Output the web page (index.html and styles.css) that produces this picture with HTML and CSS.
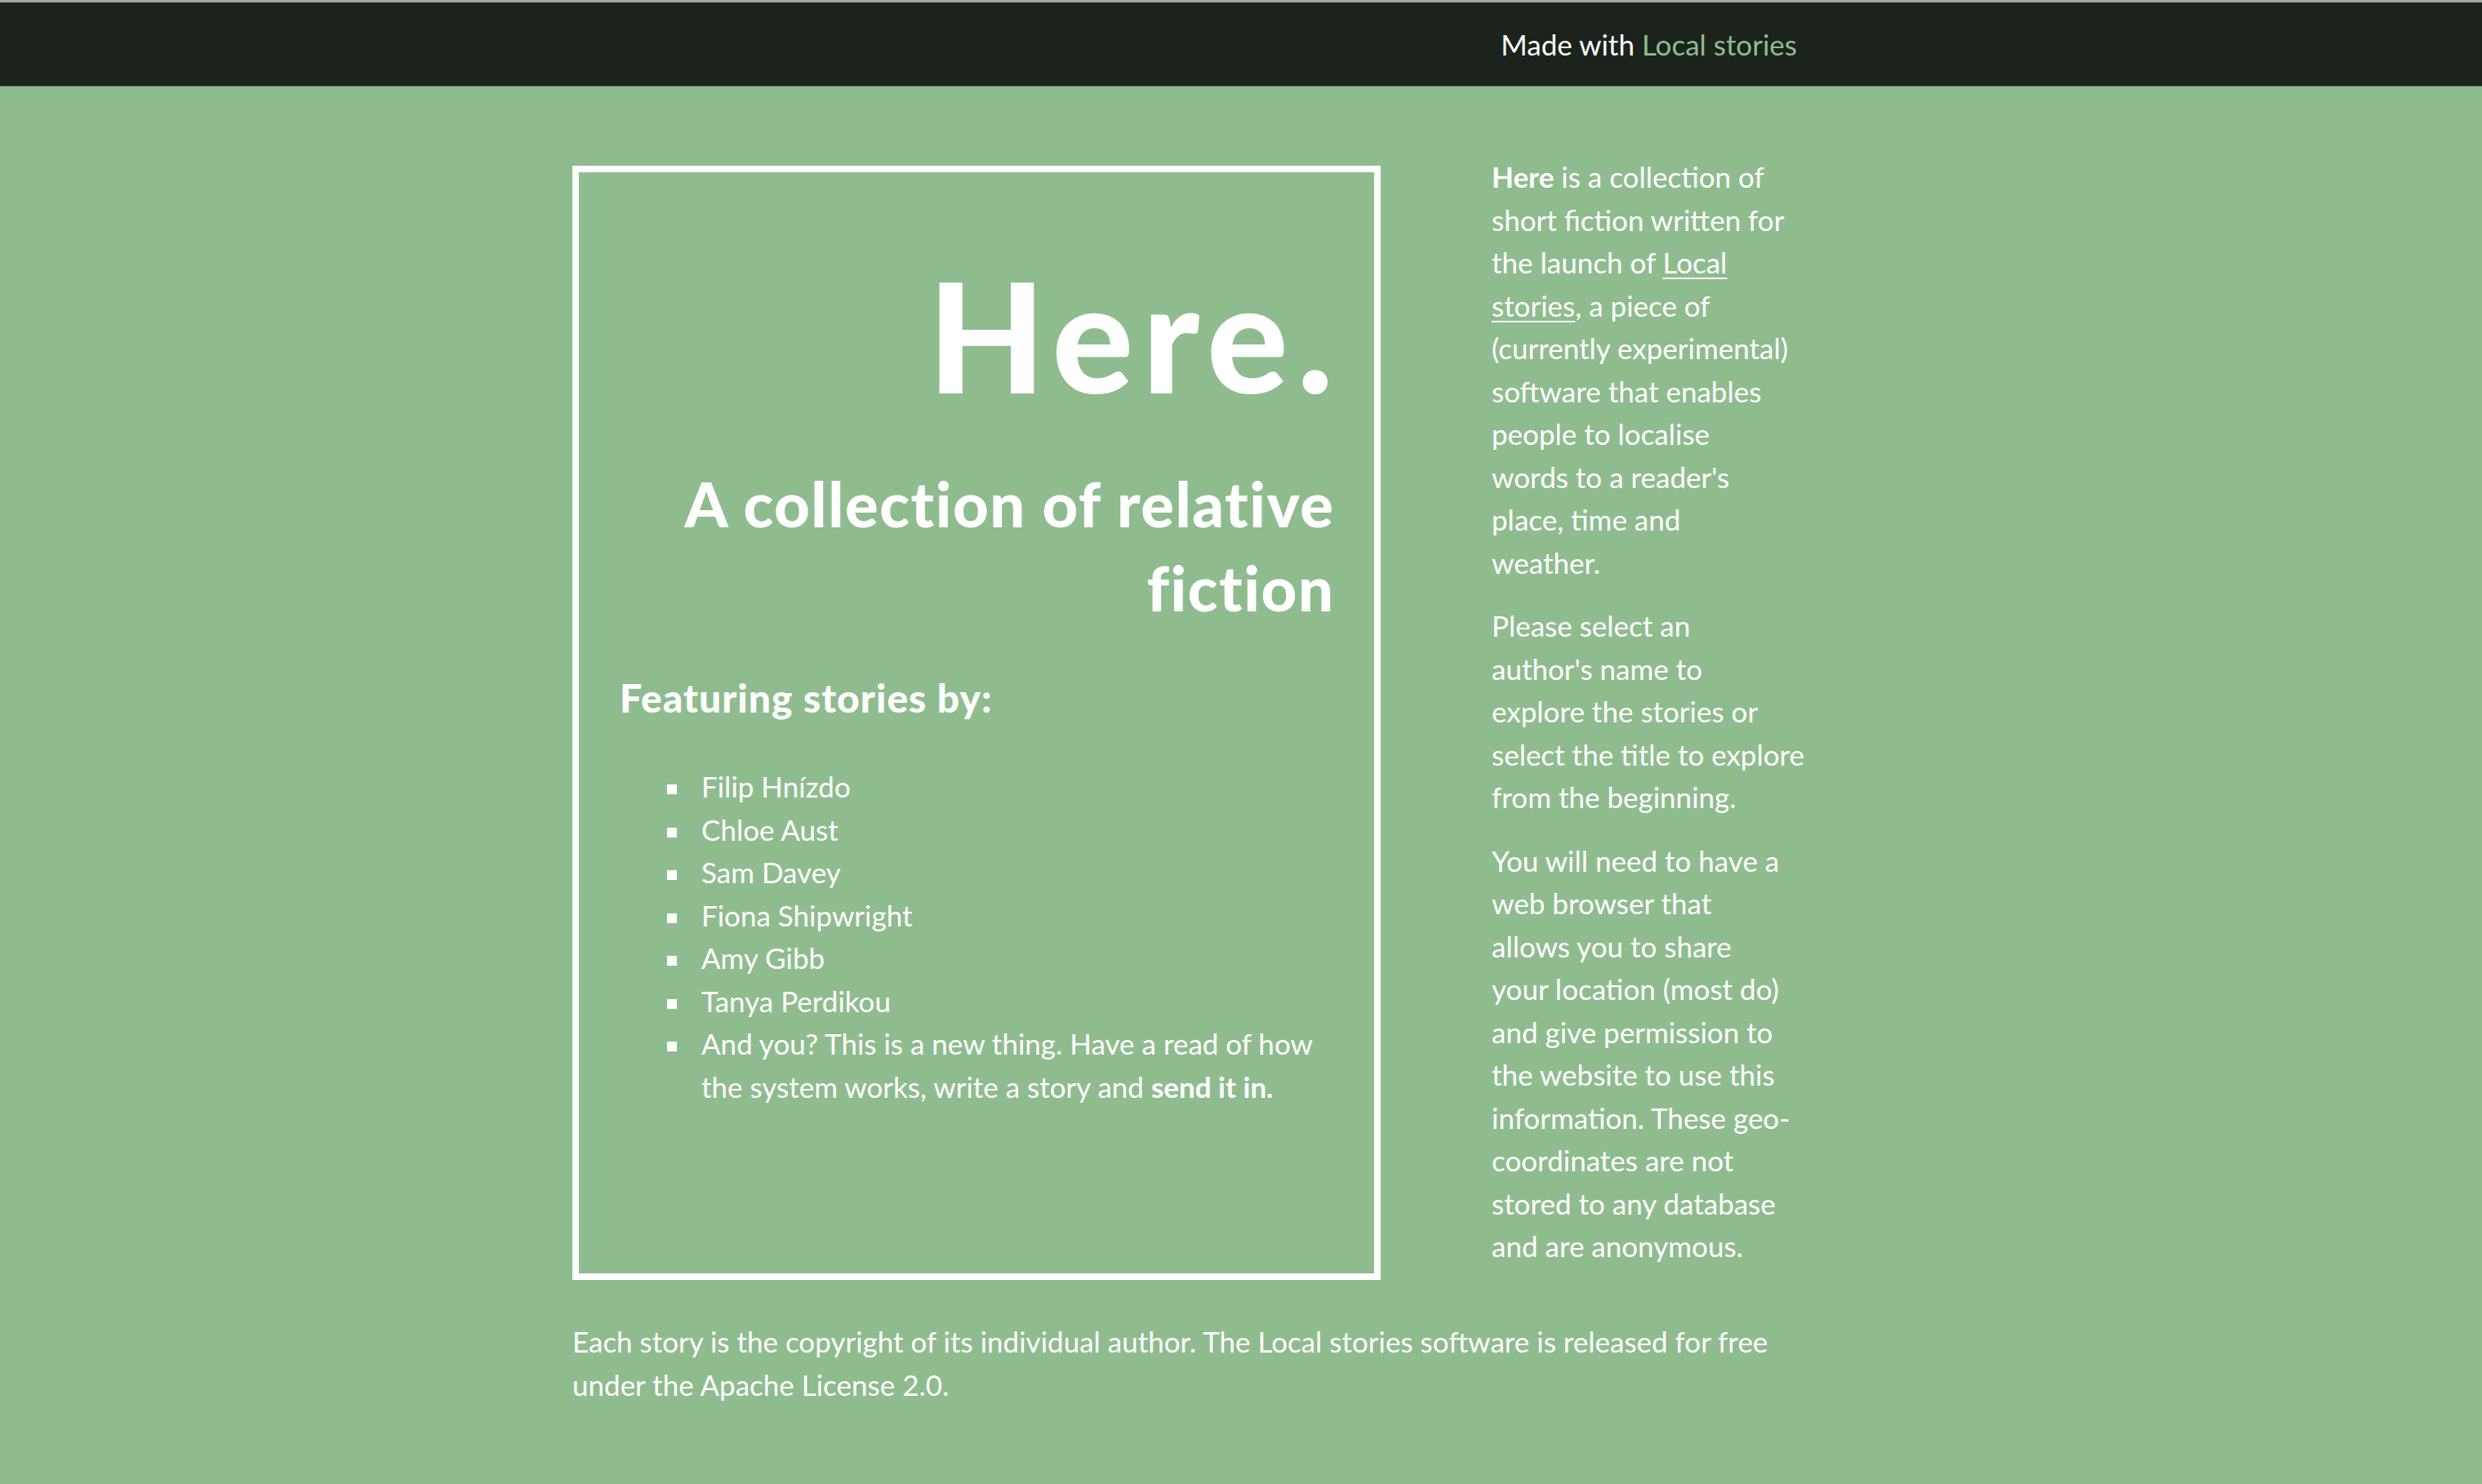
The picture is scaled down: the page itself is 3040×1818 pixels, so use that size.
FILE: index.html
```html
<!DOCTYPE html>
<html lang="en">
<head>
<meta charset="utf-8">
<title>Here. A collection of relative fiction</title>
<link rel="stylesheet" href="styles.css">
</head>
<body>
<header class="topbar">
  <div class="wrap topbar-inner">Made with <a class="brand" href="#">Local stories</a></div>
</header>
<main class="wrap">
  <div class="columns">
    <section class="cover">
      <h1 class="title">Here.</h1>
      <h2 class="subtitle">A collection of relative fiction</h2>
      <h3 class="featuring">Featuring stories by:</h3>
      <ul class="authors">
        <li>Filip Hnízdo</li>
        <li>Chloe Aust</li>
        <li>Sam Davey</li>
        <li>Fiona Shipwright</li>
        <li>Amy Gibb</li>
        <li>Tanya Perdikou</li>
        <li>And you? This is a new thing. Have a read of how the system works, write a story and <strong>send it in.</strong></li>
      </ul>
    </section>
    <aside class="about">
      <p><strong>Here</strong> is a collection of<br>short fiction written for<br>the launch of <a href="#">Local<br>stories</a>, a piece of<br>(currently experimental)<br>software that enables<br>people to localise<br>words to a reader's<br>place, time and<br>weather.</p>
      <p>Please select an<br>author's name to<br>explore the stories or<br>select the title to explore<br>from the beginning.</p>
      <p>You will need to have a<br>web browser that<br>allows you to share<br>your location (most do)<br>and give permission to<br>the website to use this<br>information. These geo-<br>coordinates are not<br>stored to any database<br>and are anonymous.</p>
    </aside>
  </div>
  <p class="legal">Each story is the copyright of its individual author. The Local stories software is released for free under the Apache License 2.0.</p>
</main>
</body>
</html>
```

FILE: styles.css
```css
html, body {
  margin: 0;
  padding: 0;
}

body {
  background: #8fbc8f;
  color: #ffffff;
  font-family: "Lato", "Open Sans", sans-serif;
  font-size: 35px;
  line-height: 52.5px;
  border-top: 3px solid #a8a8a8;
}

.wrap {
  width: 1500px;
  margin-left: 701px;
}

.topbar {
  background: #1b231c;
  height: 102px;
  border-bottom: 1px solid #56665a;
}

.topbar-inner {
  text-align: right;
  line-height: 102px;
  color: #ffffff;
}

.brand {
  color: #8fbc8f;
  text-decoration: none;
}

.columns {
  display: flex;
  align-items: flex-start;
  gap: 136px;
  margin-top: 84px;
}

.cover {
  flex: none;
  box-sizing: border-box;
  width: 990px;
  height: 1365px;
  margin-top: 13px;
  border: 8px solid #ffffff;
  padding: 105px 50px 0 50px;
}

.title {
  margin: 0 -11px 0 0;
  font-size: 186px;
  line-height: 188px;
  font-weight: 900;
  letter-spacing: 11px;
  text-align: right;
}

.subtitle {
  margin: 62px -1.5px 0 0;
  font-size: 76px;
  line-height: 102.5px;
  font-weight: 900;
  letter-spacing: 1.5px;
  text-align: right;
}

.featuring {
  margin: 56px 0 0 0;
  font-size: 48px;
  line-height: 56.4px;
  font-weight: 900;
  letter-spacing: 1px;
}

.authors {
  list-style: none;
  margin: 54px 0 0 0;
  padding: 0 0 0 100px;
}

.authors li {
  position: relative;
}

.authors li::before {
  content: "";
  position: absolute;
  left: -42px;
  top: 24px;
  width: 12px;
  height: 12px;
  background: #ffffff;
}

.authors strong {
  font-weight: 700;
}

.about {
  flex: none;
  width: 374px;
  white-space: nowrap;
}

.about p {
  margin: 0 0 25px 0;
}

.about p:last-child {
  margin-bottom: 0;
}

.about a {
  color: #ffffff;
  text-decoration: underline;
  text-underline-offset: 5px;
  text-decoration-thickness: 2px;
}

.legal {
  margin: 49px 0 0 0;
}
```
